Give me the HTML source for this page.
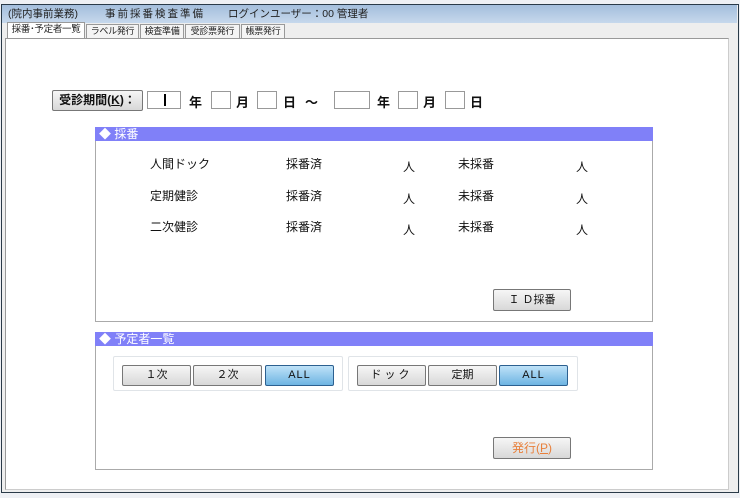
<!DOCTYPE html>
<html><head><meta charset="utf-8"><style>
*{margin:0;padding:0;box-sizing:border-box}
body{width:740px;height:498px;background:#eef0f4;position:relative;overflow:hidden;font-family:"Liberation Sans","Noto Sans CJK JP",sans-serif;font-size:12px;color:#111}
.a{position:absolute}
.frame{left:1px;top:4px;width:738px;height:489px;border:1px solid #2a3a48;background:#eeeeee}
.title{left:2px;top:5px;width:735px;height:18px;background:linear-gradient(#a4bedc,#c6d8ec);font-size:10.5px;line-height:18px;color:#222}
.tab{top:24px;height:14px;border:1px solid #999;border-bottom:none;background:#f4f4f4;font-size:9px;line-height:13px;color:#222;white-space:nowrap;overflow:hidden;text-align:center;letter-spacing:-0.3px}
.panel{left:5px;top:38px;width:724px;height:452px;background:#fff;border:1px solid #999;border-right-color:#ccc;border-bottom-color:#ccc}
.btn{border:1px solid #777;border-radius:2px;background:linear-gradient(#f6f6f6,#d8d8d8);text-align:center;font-size:11px;line-height:19px;white-space:nowrap}
.sel{border-color:#2c6090;background:linear-gradient(#bfe2f8,#6eb4e2);letter-spacing:1px}
.box{border:1px solid #999;height:18px;top:91px;background:#fff}
.lbl{top:92px;font-size:13px;font-weight:bold}
.hdr{height:14px;background:#8080f8;color:#fff;font-size:12px;line-height:14px;padding-left:4px}
.sec{border:1px solid #aaa;border-top:none;background:#fff}
.t{font-size:12px}
.grp{border:1px solid #e0e4e8;border-radius:2px}
</style></head><body>
<div class="a frame"></div>
<div class="a title"><span style="position:absolute;left:6px">(院内事前業務)</span><span style="position:absolute;left:103px;letter-spacing:2px">事前採番検査準備</span><span style="position:absolute;left:226px">ログインユーザー：00 管理者</span></div>
<div class="a tab" style="left:7px;width:78px;top:22px;height:16px;background:#fff;line-height:14px;font-size:9.5px">採番･予定者一覧</div>
<div class="a tab" style="left:86px;width:53px">ラベル発行</div>
<div class="a tab" style="left:140px;width:44px">検査準備</div>
<div class="a tab" style="left:185px;width:55px">受診票発行</div>
<div class="a tab" style="left:241px;width:44px">帳票発行</div>
<div class="a panel"></div>

<div class="a btn" style="left:52px;top:90px;width:91px;height:21px;font-weight:bold;font-size:12px">受診期間(<u>K</u>)：</div>
<div class="a box" style="left:147px;width:34px"></div><div class="a" style="left:164px;top:94px;width:2px;height:12px;background:#000"></div>
<div class="a lbl" style="left:189px">年</div>
<div class="a box" style="left:211px;width:20px"></div><div class="a lbl" style="left:236px">月</div>
<div class="a box" style="left:257px;width:20px"></div><div class="a lbl" style="left:283px">日</div>
<div class="a lbl" style="left:305px">～</div>
<div class="a box" style="left:334px;width:36px"></div><div class="a lbl" style="left:377px">年</div>
<div class="a box" style="left:398px;width:20px"></div><div class="a lbl" style="left:423px">月</div>
<div class="a box" style="left:445px;width:20px"></div><div class="a lbl" style="left:470px">日</div>

<div class="a hdr" style="left:95px;top:127px;width:558px">◆ 採番</div>
<div class="a sec" style="left:95px;top:141px;width:558px;height:181px"></div>
<div class="a t" style="left:150px;top:155px">人間ドック</div><div class="a t" style="left:286px;top:155px">採番済</div><div class="a t" style="left:403px;top:158px">人</div><div class="a t" style="left:458px;top:155px">未採番</div><div class="a t" style="left:576px;top:158px">人</div>
<div class="a t" style="left:150px;top:187px">定期健診</div><div class="a t" style="left:286px;top:187px">採番済</div><div class="a t" style="left:403px;top:190px">人</div><div class="a t" style="left:458px;top:187px">未採番</div><div class="a t" style="left:576px;top:190px">人</div>
<div class="a t" style="left:150px;top:218px">二次健診</div><div class="a t" style="left:286px;top:218px">採番済</div><div class="a t" style="left:403px;top:221px">人</div><div class="a t" style="left:458px;top:218px">未採番</div><div class="a t" style="left:576px;top:221px">人</div>
<div class="a btn" style="left:493px;top:289px;width:78px;height:22px;line-height:20px">Ｉ Ｄ採番</div>

<div class="a hdr" style="left:95px;top:332px;width:558px">◆ 予定者一覧</div>
<div class="a sec" style="left:95px;top:346px;width:558px;height:124px"></div>
<div class="a grp" style="left:113px;top:356px;width:230px;height:35px"></div>
<div class="a grp" style="left:348px;top:356px;width:230px;height:35px"></div>
<div class="a btn" style="left:122px;top:365px;width:69px;height:21px">１次</div>
<div class="a btn" style="left:193px;top:365px;width:69px;height:21px">２次</div>
<div class="a btn sel" style="left:265px;top:365px;width:69px;height:21px">ALL</div>
<div class="a btn" style="left:357px;top:365px;width:69px;height:21px;letter-spacing:3px">ドック</div>
<div class="a btn" style="left:428px;top:365px;width:69px;height:21px">定期</div>
<div class="a btn sel" style="left:499px;top:365px;width:69px;height:21px">ALL</div>
<div class="a btn" style="left:493px;top:437px;width:78px;height:22px;line-height:20px;color:#e8803c;font-size:12px">発行(<u>P</u>)</div>
</body></html>
